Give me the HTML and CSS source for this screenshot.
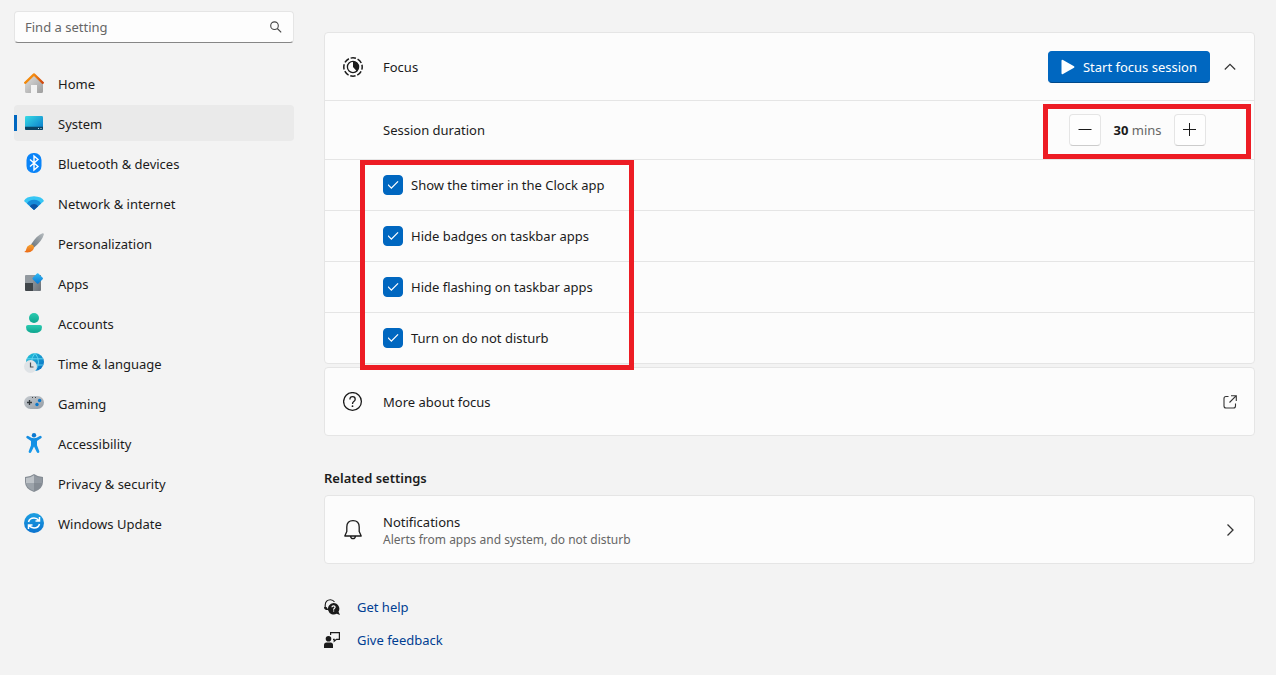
FILE: index.html
```html
<!DOCTYPE html>
<html lang="en">
<head>
<meta charset="utf-8">
<meta name="viewport" content="width=device-width, initial-scale=1">
<title>Settings - Focus</title>
<link rel="stylesheet" href="styles.css">
</head>
<body>
<div class="app">
  <aside class="sidebar">
    <form class="search">
      <input class="search-input" type="search" placeholder="Find a setting" aria-label="Find a setting">
      <button class="search-button" type="submit" aria-label="Search">
        <svg width="14" height="14" viewBox="0 0 14 14" fill="none" stroke="#444" stroke-width="1.100"><circle cx="5.500" cy="5.700" r="3.800"/><path d="M8.300 8.500l3.900 3.900"/></svg>
      </button>
    </form>
    <nav class="nav">
      <a class="nav-item" href="#">
        <svg class="nav-icon" viewBox="0 0 20 20"><defs><linearGradient id="wall" x2="1" y2="1"><stop stop-color="#e2e2e2"/><stop offset="1" stop-color="#9d9d9d"/></linearGradient><linearGradient id="roof"><stop stop-color="#f28a0c"/><stop offset=".5" stop-color="#f58b10"/><stop offset="1" stop-color="#cf4710"/></linearGradient></defs><path fill="url(#wall)" d="M1 9.500l9-8 9 8V18.500q0 1.500-1.500 1.500H13v-8H7v8H2.500Q1 20 1 18.500z"/><path fill="none" stroke="url(#roof)" stroke-width="2.300" stroke-linecap="round" stroke-linejoin="round" d="M1.200 9.800L10 1.400l8.800 8.400"/></svg>
        <span>Home</span></a>
      <a class="nav-item nav-item-active" href="#" aria-current="page">
        <svg class="nav-icon" viewBox="0 0 20 20"><defs><linearGradient id="screen" x2="1" y2="1"><stop stop-color="#37dbe5"/><stop offset="1" stop-color="#0876c9"/></linearGradient></defs><rect x="1" y="3" width="18" height="14" rx="1.200" fill="url(#screen)"/><path fill="#0b4363" d="M1 13.700h18v2.100q0 1.200-1.200 1.200H2.200Q1 17 1 15.800z"/><path fill="#bfe6f5" d="M14 15h1v1h-1zM16.500 15h1v1h-1z"/></svg>
        <span>System</span></a>
      <a class="nav-item" href="#">
        <svg class="nav-icon" viewBox="0 0 20 20"><rect x="2.500" width="15" height="20" rx="7" fill="#0a84f8"/><path fill="none" stroke="#fff" stroke-width="1.400" d="M6 6.500l8 7-4 3.500V3l4 3.500-8 7"/></svg>
        <span>Bluetooth &amp; devices</span></a>
      <a class="nav-item" href="#">
        <svg class="nav-icon" viewBox="0 0 20 20"><path fill="#36c6f4" d="M0 8Q2 3.500 10 3.200 18 3.500 20 8L10 17z"/><path fill="#168bd9" d="M3 10.400Q5 7 10 6.800q5 .2 7 3.600L10 17z"/><path fill="#0c54a6" d="M5.800 13.200Q7.500 11 10 11t4.200 2.200L10 17z"/></svg>
        <span>Network &amp; internet</span></a>
      <a class="nav-item" href="#">
        <svg class="nav-icon" viewBox="0 0 20 20"><defs><linearGradient id="handle" x1="1" x2="0" y2="1"><stop stop-color="#b6bcc0"/><stop offset="1" stop-color="#667078"/></linearGradient><linearGradient id="bristle" x2="0" y2="1"><stop stop-color="#f3a535"/><stop offset="1" stop-color="#ec6915"/></linearGradient></defs><path fill="url(#handle)" d="M7 11.500Q13 2 18.500.2q1.700-.2 1.300 1.500Q18 8 9.800 14.700z"/><path fill="url(#bristle)" d="M5.500 12q2.500-1.200 4 .8 1.300 2.300-.7 4.400Q5.500 20.500.2 19q2-1 2.200-3.200Q2.700 13 5.500 12z"/></svg>
        <span>Personalization</span></a>
      <a class="nav-item" href="#">
        <svg class="nav-icon" viewBox="0 0 20 20"><defs><linearGradient id="tile" x2="1" y2="1"><stop stop-color="#939aa0"/><stop offset="1" stop-color="#6b7178"/></linearGradient><linearGradient id="diamond" x2="1" y2="1"><stop stop-color="#34bdf5"/><stop offset="1" stop-color="#0976d2"/></linearGradient></defs><path fill="#92999f" d="M1 3q0-1 1-1h7v8H1z"/><path fill="#3f4549" d="M1 10h8v8H2q-1 0-1-1z"/><path fill="url(#tile)" d="M9 2h8v15q0 1-1 1H9z"/><rect x="9.700" y="1.500" width="8" height="8" rx="1" fill="url(#diamond)" transform="rotate(45 13.700 5.500)"/></svg>
        <span>Apps</span></a>
      <a class="nav-item" href="#">
        <svg class="nav-icon" viewBox="0 0 20 20"><defs><linearGradient id="person" x2="0" y2="1"><stop stop-color="#2bcbb1"/><stop offset="1" stop-color="#0da58e"/></linearGradient></defs><circle cx="10" cy="5" r="5" fill="url(#person)"/><path fill="url(#person)" d="M4 12h12q2 0 2 2 0 6-8 6t-8-6q0-2 2-2z"/></svg>
        <span>Accounts</span></a>
      <a class="nav-item" href="#">
        <svg class="nav-icon" viewBox="0 0 20 20"><defs><linearGradient id="globe" x2="1" y2="1"><stop stop-color="#26c7d8"/><stop offset="1" stop-color="#0669c5"/></linearGradient></defs><circle cx="11" cy="9" r="9" fill="url(#globe)"/><path fill="none" stroke="#69d9f2" stroke-width=".9" d="M3 5.800h16M3 12h16M11 0Q4 9 11 18M11 0q7 9 0 18"/><circle cx="6.500" cy="13.500" r="6.500" fill="#dfe3e6"/><path fill="none" stroke="#4a5056" stroke-width="1.200" d="M6.500 9.500v4.500H9.500"/></svg>
        <span>Time &amp; language</span></a>
      <a class="nav-item" href="#">
        <svg class="nav-icon" viewBox="0 0 20 20"><defs><linearGradient id="pad" x2="1" y2="1"><stop stop-color="#c6cbd0"/><stop offset="1" stop-color="#949ca4"/></linearGradient></defs><rect y="3" width="20" height="13" rx="6.500" fill="url(#pad)"/><path stroke="#30363b" stroke-width="1.300" d="M3 9.500h5M5.500 7v5"/><circle cx="15.600" cy="7.500" r="1.700" fill="#0876cb"/><circle cx="13" cy="11.500" r="1.700" fill="#0876cb"/><path fill="#444" d="M8 4h1v1H8zM11 4h1v1h-1z"/></svg>
        <span>Gaming</span></a>
      <a class="nav-item" href="#">
        <svg class="nav-icon" viewBox="0 0 20 20"><defs><linearGradient id="figure" x2="0" y2="1"><stop stop-color="#148ce0"/><stop offset="1" stop-color="#1598eb"/></linearGradient></defs><circle cx="10" cy="2.300" r="2.200" fill="#0b79d0"/><path fill="url(#figure)" d="M2.700 3.200q1-.7 2 .1Q10 7.400 15.300 3.300q1-.8 2-.1 1 1.200-.2 2.100L13 8v4.200l2.300 6q.3 1.500-1 1.800-1.100.1-1.600-1L10 13.500 7.300 19q-.5 1.100-1.600 1-1.300-.3-1-1.800l2.300-6V8L2.900 5.300q-1.200-.9-.2-2.100z"/></svg>
        <span>Accessibility</span></a>
      <a class="nav-item" href="#">
        <svg class="nav-icon" viewBox="0 0 20 20"><path fill="#858c94" d="M10 1q4 3 9 3v5q0 7-9 10-9-3-9-10V4q5 0 9-3z"/><path fill="#bdc2c7" d="M10 2.200V10H2V5q4.500-.2 8-2.800z"/><path fill="#9299a1" d="M10 2.200V10h8V5q-4.500-.2-8-2.800z"/><path fill="#9ca3aa" d="M2 10h8v7.900Q3 15.500 2 10z"/></svg>
        <span>Privacy &amp; security</span></a>
      <a class="nav-item" href="#">
        <svg class="nav-icon" viewBox="0 0 20 20"><defs><linearGradient id="update" x2="0" y2="1"><stop stop-color="#1da0e2"/><stop offset="1" stop-color="#0b73cf"/></linearGradient></defs><circle cx="10" cy="10" r="10" fill="url(#update)"/><path fill="none" stroke="#fff" stroke-width="1.500" d="M4.500 9Q5.500 5 10 5q3 0 5 2.700M15.500 4v4h-4M15.500 11q-1 4-5.500 4-3 0-5-2.700M4.500 16v-4h4"/></svg>
        <span>Windows Update</span></a>
    </nav>
  </aside>

  <main class="content">
    <section class="card" aria-label="Focus">
      <div class="row">
        <svg class="row-icon" viewBox="0 0 20 20"><circle cx="10" cy="10" r="9.200" fill="none" stroke="#1b1b1b" stroke-width="1.500" stroke-dasharray="5.400 1.826" stroke-dashoffset="2.700"/><circle cx="10" cy="10" r="5.600" fill="none" stroke="#1b1b1b" stroke-width="1.300"/><path fill="#1b1b1b" d="M10 4.500v5.500l3.800 4.300A5.600 5.600 0 0 0 10 4.500z"/></svg>
        <span class="row-title">Focus</span>
        <button class="primary-button" type="button">
          <svg width="14" height="16" viewBox="0 0 14 16" fill="#fff"><path d="M.5 2Q.5.300 2 1l11 6.200q1 .8 0 1.600L2 15Q.5 15.700.5 14z"/></svg>
          <span>Start focus session</span>
        </button>
        <button class="icon-button" type="button" aria-label="Collapse" aria-expanded="true">
          <svg width="12" height="12" viewBox="0 0 12 12" fill="none" stroke="#333" stroke-width="1.200"><path d="M.8 8.500L6 3.300l5.200 5.200"/></svg>
        </button>
      </div>
      <div class="session">
        <span class="row-title">Session duration</span>
        <button class="step-button" type="button" aria-label="Decrease duration"><svg width="14" height="14" viewBox="0 0 14 14" stroke="#1b1b1b"><path d="M.5 6.500h13"/></svg></button>
        <span class="duration"><strong>30</strong> mins</span>
        <button class="step-button" type="button" aria-label="Increase duration"><svg width="14" height="14" viewBox="0 0 14 14" stroke="#1b1b1b"><path d="M0 6.500h13M6.500 0v13"/></svg></button>
        <span class="callout callout-duration"></span>
      </div>
      <div class="options">
        <label class="option"><input class="check" type="checkbox" checked><span>Show the timer in the Clock app</span></label>
        <label class="option"><input class="check" type="checkbox" checked><span>Hide badges on taskbar apps</span></label>
        <label class="option"><input class="check" type="checkbox" checked><span>Hide flashing on taskbar apps</span></label>
        <label class="option"><input class="check" type="checkbox" checked><span>Turn on do not disturb</span></label>
        <span class="callout callout-options"></span>
      </div>
    </section>

    <a class="card card-link row" href="#">
      <svg class="row-icon" viewBox="0 0 20 20" fill="none" stroke="#1b1b1b" stroke-width="1.300"><circle cx="9.500" cy="9.500" r="8.900"/><path d="M6.900 7.500q0-2.800 2.700-2.800 2.600 0 2.600 2.500 0 1.300-1.400 2.300Q9.500 10.400 9.500 12"/><circle cx="9.500" cy="14.200" r=".9" fill="#1b1b1b" stroke="none"/></svg>
      <span class="row-title">More about focus</span>
      <svg class="row-end" viewBox="0 0 14 14" fill="none" stroke="#333" stroke-width="1.100"><path d="M5.500 1.500H3Q1 1.500 1 3.500v7.500q0 2 2 2h7.500q2 0 2-2V8.500M8 .7h5.300V6M13.300.7L6.500 7.500"/></svg>
    </a>

    <h2 class="heading">Related settings</h2>
    <a class="card row" href="#">
      <svg class="row-icon" viewBox="0 0 20 20" fill="none" stroke="#1b1b1b" stroke-width="1.300" stroke-linejoin="round"><path d="M10 .7Q3.800.7 3.800 7v4.500L1.800 16h16.400l-2-4.500V7Q16.200.7 10 .7zM7.500 16.200q.3 2.500 2.500 2.500t2.500-2.500"/></svg>
      <span class="row-title row-stack"><span>Notifications</span><small class="row-note">Alerts from apps and system, do not disturb</small></span>
      <svg class="row-end" viewBox="0 0 14 14" fill="none" stroke="#333" stroke-width="1.300"><path d="M4.500 1.500L10 7l-5.500 5.500"/></svg>
    </a>

    <div class="links">
      <a class="link" href="#">
        <svg class="link-icon" viewBox="0 0 16 16"><path fill="none" stroke="#1b1b1b" stroke-width="1.100" d="M1.200 9.500V6Q1.500.800 6.500.700q2.500 0 4 2.300"/><path fill="#1b1b1b" d="M0 8h2.500l2 3H2Q0 10.500 0 8z"/><path fill="#1b1b1b" d="M9.500 4a5.800 5.800 0 0 1 5 8.800L16 16l-3.300-1.200A5.800 5.800 0 1 1 9.500 4z"/><path fill="none" stroke="#fff" stroke-width="1.200" d="M7.900 8.300q.1-1.500 1.600-1.500 1.600 0 1.600 1.300 0 .8-.8 1.300t-.7 1.300M9 12h1.200"/></svg>
        <span>Get help</span></a>
      <a class="link" href="#">
        <svg class="link-icon" viewBox="0 0 16 16"><path fill="none" stroke="#1b1b1b" stroke-width="1.200" d="M6.600 3V.6h8.800v6.800h-2.900l-2.300 1.800V7.400H9"/><circle cx="4.500" cy="6.800" r="2.800" fill="#1b1b1b"/><path fill="#1b1b1b" d="M0 16v-3q0-2.500 2.500-2.500h4Q9 10.500 9 13v3z"/></svg>
        <span>Give feedback</span></a>
    </div>
  </main>
</div>
</body>
</html>
```
FILE: styles.css
```css
* {
  box-sizing: border-box;
}

body {
  margin: 0;
  background: #f3f3f3;
  color: #1b1b1b;
  font: 13px/20px "Noto Sans", "Open Sans", sans-serif;
}

a {
  color: inherit;
  text-decoration: none;
}

button,
input {
  margin: 0;
  font: inherit;
}

.app {
  display: grid;
  grid-template-columns: 280px minmax(0, 1fr);
  gap: 30px;
  padding: 11px 21px 24px 14px;
}

.search {
  display: flex;
  align-items: center;
  height: 32px;
  padding: 0 10px;
  border: 1px solid #e5e5e5;
  border-bottom-color: #868686;
  border-radius: 4px;
  background: #fdfdfd;
}

.search-input {
  flex: 1;
  min-width: 0;
  padding: 0;
  border: 0;
  outline: 0;
  background: transparent;
}

.search-input::placeholder {
  color: #666;
  opacity: 1;
}

.search-button,
.icon-button {
  display: grid;
  place-items: center;
  padding: 0;
  border: 0;
  background: transparent;
}

.nav {
  display: grid;
  gap: 4px;
  margin-top: 22px;
}

.nav-item {
  display: flex;
  align-items: center;
  gap: 14px;
  height: 36px;
  padding: 0 10px;
  border-radius: 4px;
}

.nav-item span {
  padding-top: 2px;
}

.nav-item-active {
  background: linear-gradient(#0067c0, #0067c0) left center / 3px 16px no-repeat #eaeaea;
}

.nav-icon,
.row-icon {
  width: 20px;
  height: 20px;
  flex: none;
}

.content {
  padding-top: 21px;
}

.card {
  border: 1px solid #e5e5e5;
  border-radius: 4px;
  background: #fcfcfc;
}

.card-link {
  margin-top: 3px;
}

.row {
  display: flex;
  align-items: center;
  min-height: 67px;
  padding: 0 17px 0 18px;
}

.card.row {
  min-height: 69px;
}

.row-icon {
  margin-right: 20px;
}

.row-title {
  flex: 1;
}

.row-stack {
  display: grid;
}

.row-note {
  color: #666;
  font-size: 12px;
  line-height: 16px;
}

.row-end {
  width: 14px;
  height: 14px;
}

.primary-button {
  display: flex;
  align-items: center;
  justify-content: center;
  gap: 8px;
  height: 32px;
  min-width: 162px;
  padding: 0 12px;
  border: 1px solid #0067c0;
  border-bottom-color: #00498a;
  border-radius: 4px;
  background: #0067c0;
  color: #fff;
}

.icon-button {
  width: 14px;
  height: 32px;
  margin-left: 13px;
}

.session {
  position: relative;
  display: flex;
  align-items: center;
  min-height: 59px;
  padding: 0 48px 0 58px;
  border-top: 1px solid #e5e5e5;
}

.step-button {
  display: grid;
  place-items: center;
  width: 32px;
  height: 32px;
  padding: 0;
  border: 1px solid #e5e5e5;
  border-bottom-color: #ccc;
  border-radius: 4px;
  background: #fefefe;
}

.duration {
  min-width: 73px;
  color: #666;
  text-align: center;
}

.duration strong {
  color: #1b1b1b;
}

.options {
  position: relative;
}

.option {
  display: flex;
  align-items: center;
  gap: 8px;
  height: 51px;
  padding-left: 58px;
  border-top: 1px solid #e5e5e5;
}

.check {
  display: grid;
  place-items: center;
  width: 20px;
  height: 20px;
  appearance: none;
  border-radius: 4px;
  border: 1px solid #868686;
}

.check:checked {
  border-color: #0067c0;
  background: #0067c0;
}

.check:checked::before {
  content: "";
  width: 11px;
  height: 8px;
  background: #fff;
  clip-path: polygon(0 50%, 8% 40%, 35% 78%, 92% 0, 100% 10%, 35% 100%);
}

.callout {
  position: absolute;
  border: 5px solid #ed1c24;
  pointer-events: none;
}

.callout-duration {
  top: 3px;
  right: 3px;
  bottom: 0;
  width: 208px;
}

.callout-options {
  top: 1px;
  bottom: -7px;
  left: 35px;
  width: 274px;
}

.heading {
  margin: 32px 0 7px;
  font-size: 13px;
  font-weight: 600;
  line-height: 20px;
}

.links {
  display: grid;
  justify-items: start;
  gap: 13px;
  margin-top: 33px;
}

.link {
  display: flex;
  align-items: center;
  gap: 17px;
  color: #003e92;
}

.link-icon {
  width: 16px;
  height: 16px;
}
```
